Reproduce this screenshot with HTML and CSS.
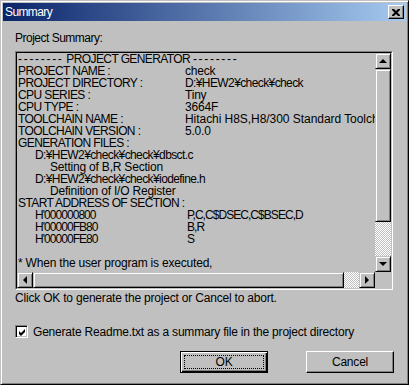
FILE: index.html
```html
<!DOCTYPE html>
<html lang="en">
<head>
    <meta charset="UTF-8">
    <meta name="viewport" content="width=device-width, initial-scale=1.0">
    <title>Summary</title>
    <link rel="stylesheet" href="styles.css">
</head>
<body>

    <div class="window">
        <div class="titlebar">
            <span class="title">Summary</span>
            <span class="close-btn">
                <svg width="8" height="7" viewBox="0 0 8 7">
                    <path d="M0 0h2l2 2 2-2h2v1l-2.5 2.5L8 6v1H6L4 5 2 7H0V6l2.5-2.5L0 1z" fill="#000"/>
                </svg>
            </span>
        </div>

        <div class="content">
            <div class="label">Project Summary:</div>

            <div class="textbox">
                <div class="textbox-inner">
                    <div class="text">
                        <div class="line caps"><span class="dashes">--------</span> PROJECT GENERATOR <span class="dashes">--------</span></div>
                        <div class="line"><span class="key">PROJECT NAME :</span>check</div>
                        <div class="line"><span class="key">PROJECT DIRECTORY :</span><span class="caps">D:¥HEW2¥check¥check</span></div>
                        <div class="line"><span class="key">CPU SERIES :</span>Tiny</div>
                        <div class="line"><span class="key">CPU TYPE :</span>3664F</div>
                        <div class="line"><span class="key">TOOLCHAIN NAME :</span><span class="wide">Hitachi H8S,H8/300 Standard Toolchain</span></div>
                        <div class="line"><span class="key">TOOLCHAIN VERSION :</span>5.0.0</div>
                        <div class="line caps">GENERATION FILES :</div>
                        <div class="line caps indent1">D:¥HEW2¥check¥check¥dbsct.c</div>
                        <div class="line indent2">Setting of B,R Section</div>
                        <div class="line caps indent1">D:¥HEW2¥check¥check¥iodefine.h</div>
                        <div class="line indent2">Definition of I/O Register</div>
                        <div class="line caps">START ADDRESS OF SECTION :</div>
                        <div class="line addr-line indent1"><span class="addr">H'000000800</span>P,C,C$DSEC,C$BSEC,D</div>
                        <div class="line addr-line indent1"><span class="addr">H'00000FB80</span>B,R</div>
                        <div class="line addr-line indent1"><span class="addr">H'00000FE80</span>S</div>
                        <div class="line"> </div>
                        <div class="line">* When the user program is executed,</div>
                    </div>

                    <div class="vscroll">
                        <span class="sb-btn"><span class="arrow up"></span></span>
                        <span class="sb-thumb v-thumb"></span>
                        <span class="sb-track"></span>
                        <span class="sb-btn"><span class="arrow down"></span></span>
                    </div>

                    <div class="hscroll">
                        <span class="sb-btn"><span class="arrow left"></span></span>
                        <span class="sb-thumb h-thumb"></span>
                        <span class="sb-track"></span>
                        <span class="sb-btn"><span class="arrow right"></span></span>
                    </div>

                    <div class="corner"></div>
                </div>
            </div>

            <div class="hint">Click OK to generate the project or Cancel to abort.</div>

            <label class="check-row">
                <span class="checkbox">
                    <svg width="9" height="9" viewBox="0 0 9 9">
                        <path d="M1 3l2 2 4-4v3l-4 4-2-2z" fill="#000"/>
                    </svg>
                </span>
                Generate Readme.txt as a summary file in the project directory
            </label>

            <div class="buttons">
                <button type="button" class="btn default"><span class="focus">OK</span></button>
                <button type="button" class="btn">Cancel</button>
            </div>
        </div>
    </div>

</body>
</html>
```

FILE: styles.css
```css
body {
    margin: 0;
    background-color: #c0c0c0;
    font-family: "Liberation Sans", Arial, sans-serif;
    font-size: 12px;
    letter-spacing: -0.2px;
    color: #000;
}

.window {
    width: 409px;
    height: 385px;
    box-sizing: border-box;
    padding: 2px;
    border: 1px solid;
    border-color: #c0c0c0 #000 #000 #c0c0c0;
    box-shadow: inset 1px 1px #fff, inset -1px -1px #808080;
    background-color: #c0c0c0;
}

.titlebar {
    height: 18px;
    display: flex;
    align-items: center;
    justify-content: space-between;
    padding: 0 2px 0 2px;
    background: linear-gradient(to right, #0a246a, #a6caf0);
    color: #fff;
}

.title {
    font-size: 12px;
    letter-spacing: -0.6px;
    line-height: 18px;
}

.close-btn {
    width: 16px;
    height: 14px;
    box-sizing: border-box;
    display: flex;
    align-items: center;
    justify-content: center;
    background-color: #c0c0c0;
    border: 1px solid;
    border-color: #fff #000 #000 #fff;
    box-shadow: inset -1px -1px #808080;
}

.content {
    padding: 0 12px;
}

.label {
    margin-top: 10px;
    line-height: 14px;
    letter-spacing: -0.5px;
}

.textbox {
    margin-top: 6px;
    width: 378px;
    height: 239px;
    box-sizing: border-box;
    border: 1px solid;
    border-color: #808080 #fff #fff #808080;
}

.textbox-inner {
    height: 100%;
    box-sizing: border-box;
    border: 1px solid;
    border-color: #000 #c0c0c0 #c0c0c0 #000;
    display: grid;
    grid-template-columns: 1fr 16px;
    grid-template-rows: 1fr 16px;
}

.text {
    overflow: hidden;
    padding-left: 1px;
}

.line {
    height: 12px;
    line-height: 12px;
    white-space: pre;
}

.caps,
.key {
    letter-spacing: -0.6px;
}

.key {
    display: inline-block;
    width: 167px;
}

.wide {
    letter-spacing: -0.05px;
}

.addr-line {
    letter-spacing: -0.95px;
}

.addr {
    display: inline-block;
    width: 152px;
}

.indent1 {
    padding-left: 17px;
}

.indent2 {
    padding-left: 32px;
}

.dashes {
    letter-spacing: 1.7px;
}

.vscroll {
    display: flex;
    flex-direction: column;
}

.hscroll {
    display: flex;
}

.sb-btn,
.sb-thumb {
    flex: none;
    width: 16px;
    height: 16px;
    box-sizing: border-box;
    display: flex;
    align-items: center;
    justify-content: center;
    background-color: #c0c0c0;
    border: 1px solid;
    border-color: #c0c0c0 #000 #000 #c0c0c0;
    box-shadow: inset 1px 1px #fff, inset -1px -1px #808080;
}

.v-thumb {
    height: 153px;
}

.h-thumb {
    width: 311px;
}

.sb-track {
    flex: 1;
    background-image: conic-gradient(#fff 25%, #c0c0c0 0 50%, #fff 0 75%, #c0c0c0 0);
    background-size: 2px 2px;
}

.arrow {
    width: 0;
    height: 0;
    border: 0 solid transparent;
}

.arrow.up {
    border-width: 0 4px 4px 4px;
    border-bottom-color: #000;
    margin-top: -1px;
}

.arrow.down {
    border-width: 4px 4px 0 4px;
    border-top-color: #000;
}

.arrow.left {
    border-width: 4px 4px 4px 0;
    border-right-color: #000;
    margin-left: -1px;
}

.arrow.right {
    border-width: 4px 0 4px 4px;
    border-left-color: #000;
}

.corner {
    background-color: #c0c0c0;
}

.hint {
    margin-top: 1px;
    line-height: 14px;
}

.check-row {
    margin-top: 20px;
    height: 13px;
    display: flex;
    align-items: center;
    gap: 5px;
}

.checkbox {
    width: 13px;
    height: 13px;
    box-sizing: border-box;
    display: flex;
    align-items: center;
    justify-content: center;
    background-color: #fff;
    border: 1px solid;
    border-color: #808080 #fff #fff #808080;
    box-shadow: inset 1px 1px #000, inset -1px -1px #c0c0c0;
}

.checkbox svg {
    margin: 1px 0 0 1px;
}

.buttons {
    margin-top: 13px;
    display: flex;
    justify-content: flex-end;
    gap: 38px;
}

.btn {
    width: 88px;
    height: 22px;
    box-sizing: border-box;
    padding: 0;
    font-family: inherit;
    font-size: 12px;
    letter-spacing: -0.2px;
    color: #000;
    background-color: #c0c0c0;
    border: 1px solid;
    border-color: #fff #000 #000 #fff;
    box-shadow: inset -1px -1px #808080;
}

.btn.default {
    border-color: #000;
    box-shadow: inset 1px 1px #fff, inset -1px -1px #000, inset -2px -2px #808080;
}

.focus {
    display: block;
    margin: 3px;
    height: 14px;
    line-height: 12px;
    box-sizing: border-box;
    border: 1px dotted #000;
}
```
